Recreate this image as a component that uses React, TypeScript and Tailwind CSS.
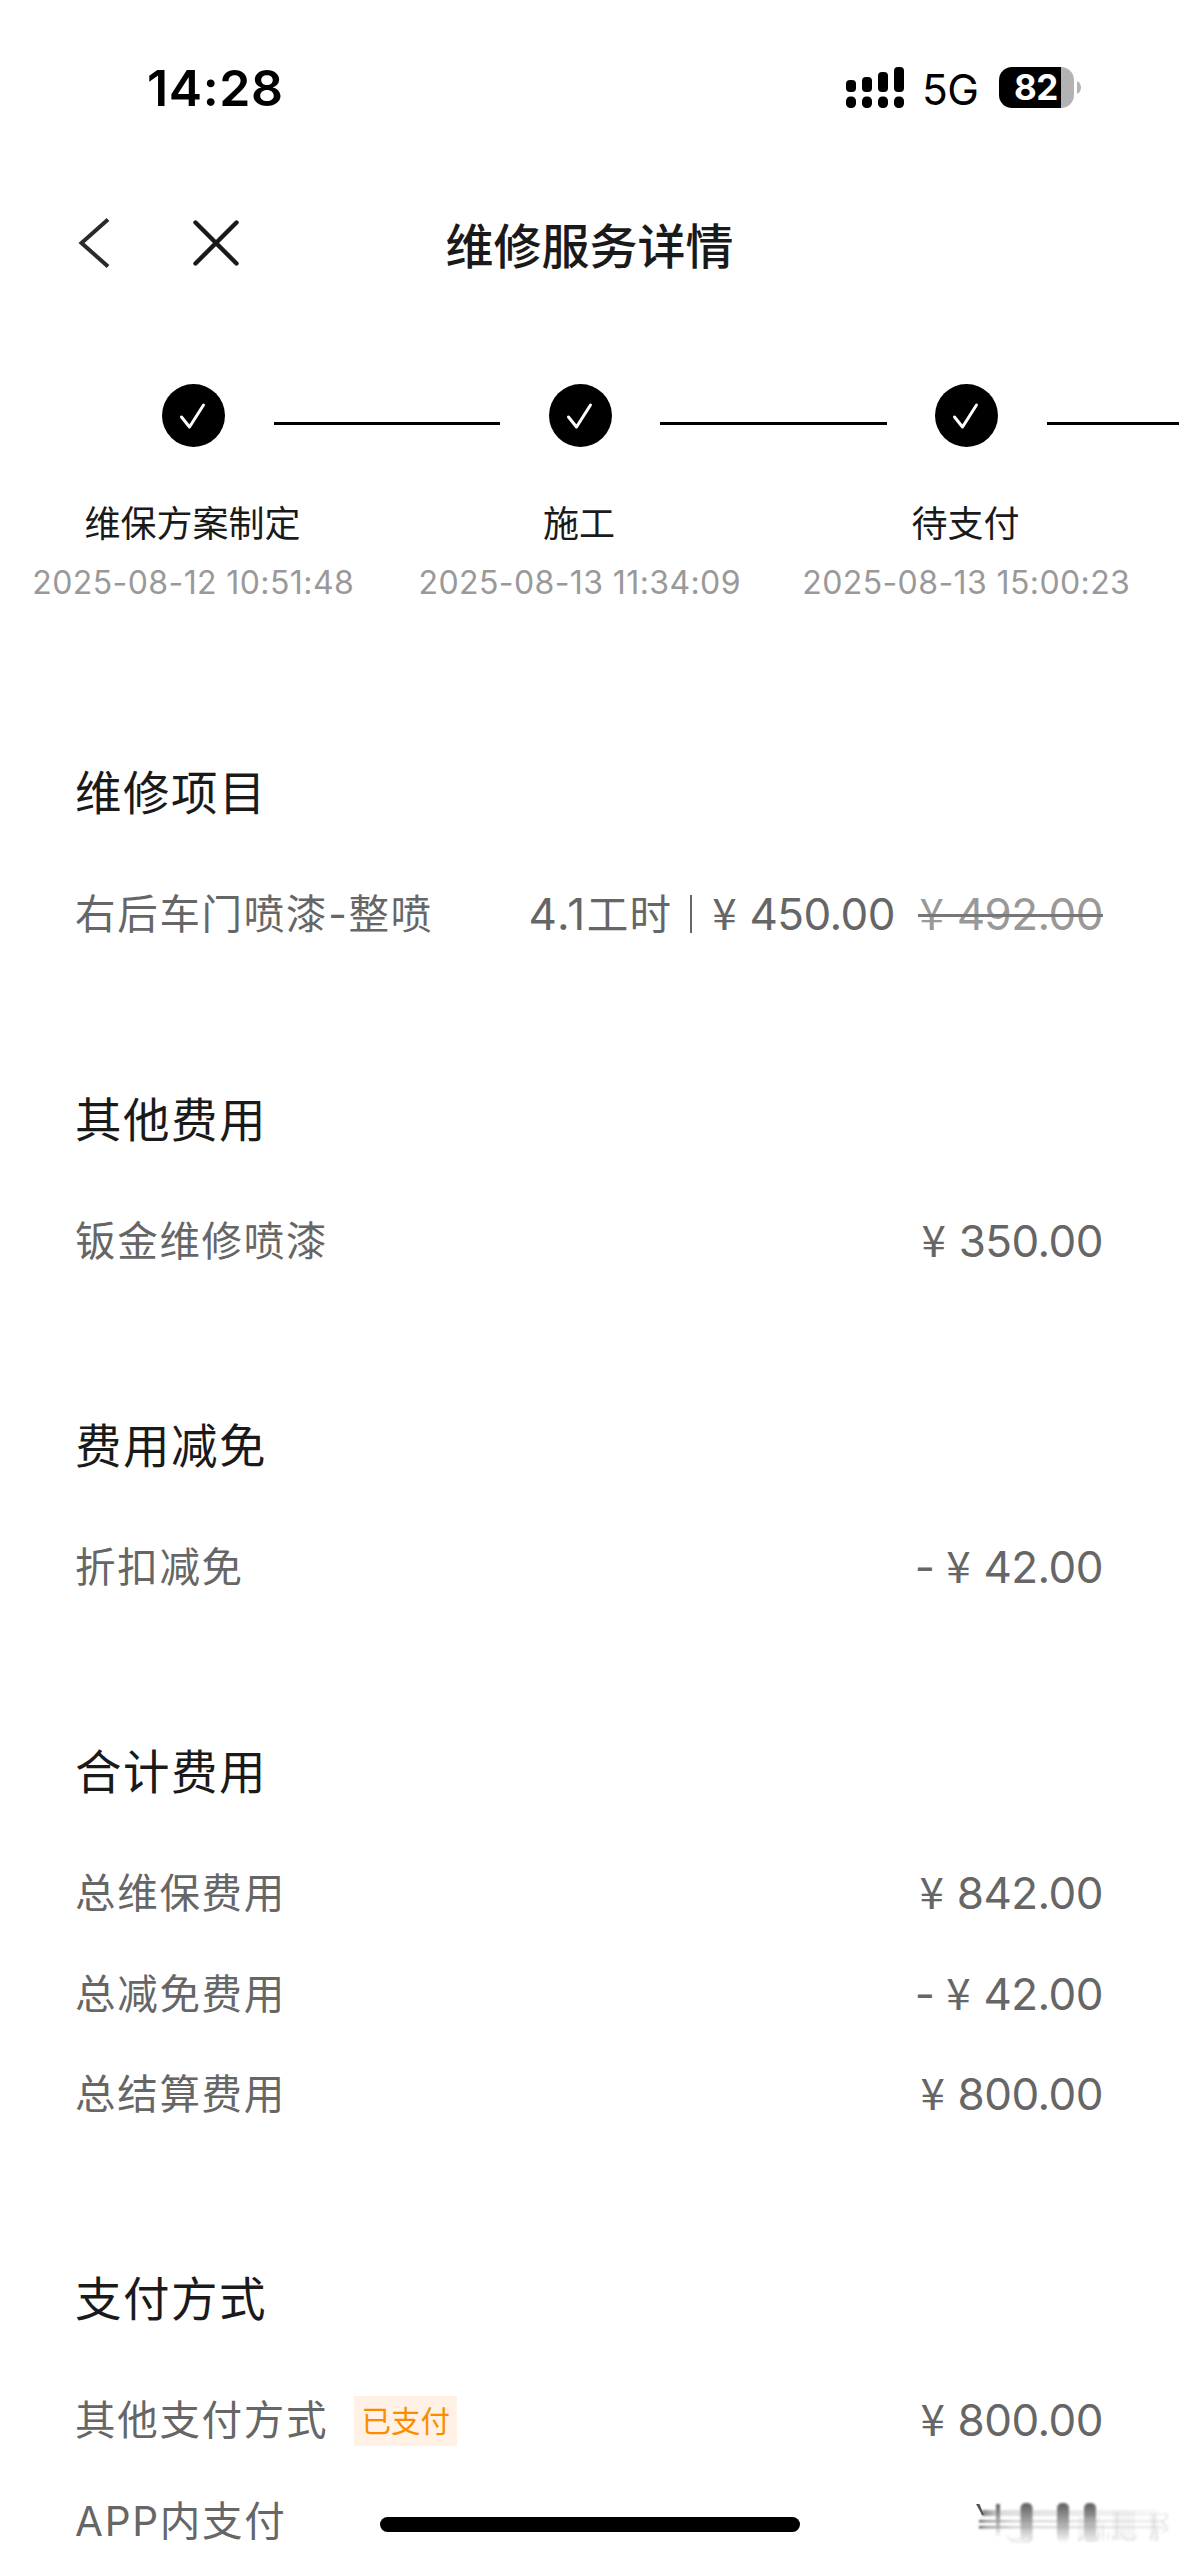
import React from "react";

const zh = "font-[Inter,'Noto_Sans_CJK_SC',sans-serif]";

function Yen() {
  return <span className="mr-[1.5px] font-['Noto_Sans_CJK_SC',sans-serif] leading-none">¥</span>;
}

function Amount({ value, negative }: { value: string; negative?: boolean }) {
  return (
    <span className="text-[44px] leading-[60px] tracking-[-0.55px] whitespace-pre">
      {negative ? "- " : ""}
      <Yen /> {value}
    </span>
  );
}

function StatusBar() {
  const bars = [
    [0, 13, 12],
    [16, 10, 15],
    [32, 5, 20],
    [48, 0, 25],
  ];
  return (
    <div className="flex h-[176px] items-start justify-between pt-[67px] pr-[98px] pl-[147px] text-black">
      <div className="-mt-[4px] text-[50px] leading-[50px] font-semibold tracking-[0.6px]">14:28</div>
      <div className="flex h-[41px] items-center">
        <svg width="58" height="41" viewBox="0 0 58 41">
          {bars.map(([x, y, h]) => (
            <g key={x}>
              <rect x={x} y={y} width="10" height={h} rx="4" />
              <rect x={x} y="29.5" width="10" height="11.5" rx="4.5" />
            </g>
          ))}
        </svg>
        <span className="mt-[3px] ml-[18px] w-[57px] text-[42.5px] leading-[41px] tracking-[-0.7px]">5G</span>
        <div className="ml-[20px] flex h-[41px] w-[75px] items-center overflow-hidden rounded-[13px] bg-[linear-gradient(to_right,#000_62px,#b3b3b3_62px)]">
          <span className="ml-[15px] text-[35px] leading-[41px] font-bold tracking-[-0.5px] text-white">82</span>
        </div>
        <svg className="ml-[3px]" width="4" height="13" viewBox="0 0 4 13">
          <path d="M0 0C3 1.5 4 4 4 6.5S3 11.5 0 13Z" fill="#b3b3b3" />
        </svg>
      </div>
    </div>
  );
}

function Header() {
  return (
    <div className="grid h-[140px] grid-cols-[445.5px_1fr] items-center">
      <div className="mb-[6px] flex h-[50px] items-center pl-[78px]">
        <svg width="32" height="50" viewBox="0 0 32 50" fill="none" stroke="#2a2a2a" strokeWidth="4">
          <path d="M30 1.5 3.5 25 30 48.5" />
        </svg>
        <svg className="ml-[82px]" width="48" height="48" viewBox="0 0 48 48" fill="none" stroke="#1a1a1a" strokeWidth="4.4" strokeLinecap="round">
          <path d="M3.5 3.5 44.5 44.5M44.5 3.5 3.5 44.5" />
        </svg>
      </div>
      <div className="mt-[2px] text-[48px] leading-[60px] font-medium text-[#1a1a1a]">维修服务详情</div>
    </div>
  );
}

const steps = [
  { label: "维保方案制定", time: "2025-08-12 10:51:48" },
  { label: "施工", time: "2025-08-13 11:34:09" },
  { label: "待支付", time: "2025-08-13 15:00:23" },
];

function Steps() {
  return (
    <div className="flex h-[374px] overflow-hidden pt-[68px]">
      {steps.map((s) => (
        <div key={s.label} className="w-[386.5px] shrink-0">
          <div className="flex h-[63px] items-center">
            <svg className="ml-[162px] shrink-0" width="63" height="63" viewBox="0 0 63 63">
              <circle cx="31.5" cy="31.5" r="31.5" />
              <path d="M19.5 33 27.5 43 41.5 21" fill="none" stroke="#fff" strokeWidth="3" strokeLinecap="round" strokeLinejoin="round" />
            </svg>
            <div className="mt-[16px] -mr-[114px] ml-[48.5px] h-[3px] w-[226.5px] shrink-0 bg-black" />
          </div>
          <div className="mt-[54px] w-[385px] text-center text-[36px] leading-[46px] text-[#1a1a1a]">{s.label}</div>
          <div className="mt-[16px] w-[386.5px] text-center text-[32px] leading-[40px] tracking-[0.4px] whitespace-nowrap text-[#999]">{s.time}</div>
        </div>
      ))}
    </div>
  );
}

function Section({ title, children }: { title: string; children: React.ReactNode }) {
  return (
    <section className="mb-[119.9px]">
      <h2 className="h-[71px] text-[46.5px] leading-[71px] tracking-[1.5px] text-[#1a1a1a]">{title}</h2>
      <div className="mt-[35px]">{children}</div>
    </section>
  );
}

function Row({ label, tag, children }: { label: string; tag?: string; children: React.ReactNode }) {
  return (
    <div className="flex h-[100.4px] items-center justify-between">
      <div className="flex items-center pt-[2px]">
        <span className="text-[40.5px] leading-[60px] tracking-[1.7px]">{label}</span>
        {tag && (
          <span className="ml-[26px] flex h-[50px] w-[103px] items-center justify-center bg-[#fff1e6] text-[29.5px] text-[#fa8c00]">{tag}</span>
        )}
      </div>
      {children}
    </div>
  );
}

function SmearedAmount() {
  const wide = [60.5, 97, 124];
  return (
    <svg className="mt-[3px] mr-[-76px]" width="219" height="66" viewBox="0 0 219 66">
      <defs>
        <linearGradient id="down" x1="0" y1="0" x2="0" y2="1">
          <stop offset="0" stopColor="#5f5f5f" />
          <stop offset="0.4" stopColor="#999" />
          <stop offset="1" stopColor="#999" stopOpacity="0.08" />
        </linearGradient>
        <linearGradient id="across" gradientUnits="userSpaceOnUse" x1="19" y1="0" x2="205" y2="0">
          <stop offset="0" stopColor="#555" />
          <stop offset="0.04" stopColor="#777" stopOpacity="0.8" />
          <stop offset="0.2" stopColor="#aaa" stopOpacity="0.5" />
          <stop offset="1" stopColor="#ccc" stopOpacity="0.35" />
        </linearGradient>
        <linearGradient id="band" gradientUnits="userSpaceOnUse" x1="21" y1="0" x2="200" y2="0">
          <stop offset="0" stopColor="#777" />
          <stop offset="0.12" stopColor="#bbb" stopOpacity="0.5" />
          <stop offset="1" stopColor="#ccc" stopOpacity="0.15" />
        </linearGradient>
        <filter id="soft" x="-10%" y="-10%" width="120%" height="120%">
          <feGaussianBlur stdDeviation="0.8" />
        </filter>
      </defs>
      <g filter="url(#soft)">
        <rect x="22" y="21" width="176" height="6" fill="url(#band)" />
        <rect x="19" y="31" width="184" height="2.4" fill="url(#across)" />
        <rect x="19" y="37" width="186" height="2.4" fill="url(#across)" />
        <rect x="36" y="15" width="4" height="32" fill="url(#down)" />
        {wide.map((x) => (
          <rect key={x} x={x} y="14" width="12" height="39" rx="5" fill="url(#down)" />
        ))}
        <g fill="#ccc" opacity="0.2">
          <rect x="118" y="28" width="22" height="24" />
          <rect x="153" y="22" width="22" height="29" />
          <rect x="190" y="24" width="8" height="28" />
        </g>
        <g fill="none" stroke="#bbb" strokeWidth="1.2" opacity="0.5">
          <path d="M47 46C48 51 52 53 58 53H66C70 53 72 51 72 47M51 50H63" />
          <path d="M118 52 122 48M127 52H136L140 44M143 35V51M148 44V51" />
          <path d="M153 46V51M157 24V50M161 44 166 51H174L176 46" />
          <path d="M190 50 194 42V26M197 40V52M199 25H207V29L202 33 207 37V41L202 43" />
        </g>
      </g>
      <path d="M16 15H19.5L24 26H22Z" fill="#555" />
    </svg>
  );
}

export default function App() {
  return (
    <div className={`relative h-[2556px] w-[1179px] overflow-hidden bg-white text-[#666] ${zh}`}>
      <StatusBar />
      <Header />
      <Steps />
      <main className="mt-[68.3px] pr-[76px] pl-[75px]">
        <Section title="维修项目">
          <Row label="右后车门喷漆-整喷">
            <div className="flex items-center">
              <span className="text-[44px] leading-[60px] tracking-[1.5px]">
                4.1<span className="text-[41.5px] tracking-[1.2px]">工时</span>
              </span>
              <span className="mr-[20px] ml-[18px] h-[38px] w-[2px] bg-[#666]" />
              <Amount value="450.00" />
              <span className="relative ml-[24.5px] text-[#999] after:absolute after:top-[50%] after:right-0 after:left-[-1px] after:mt-0 after:h-[3px] after:bg-[#777]">
                <Amount value="492.00" />
              </span>
            </div>
          </Row>
        </Section>
        <Section title="其他费用">
          <Row label="钣金维修喷漆"><Amount value="350.00" /></Row>
        </Section>
        <Section title="费用减免">
          <Row label="折扣减免"><Amount value="42.00" negative /></Row>
        </Section>
        <Section title="合计费用">
          <Row label="总维保费用"><Amount value="842.00" /></Row>
          <Row label="总减免费用"><Amount value="42.00" negative /></Row>
          <Row label="总结算费用"><Amount value="800.00" /></Row>
        </Section>
        <Section title="支付方式">
          <Row label="其他支付方式" tag="已支付"><Amount value="800.00" /></Row>
          <Row label="APP内支付"><SmearedAmount /></Row>
        </Section>
      </main>
      <div className="absolute bottom-[24px] left-[380px] h-[15px] w-[420px] rounded-full bg-black" />
    </div>
  );
}
